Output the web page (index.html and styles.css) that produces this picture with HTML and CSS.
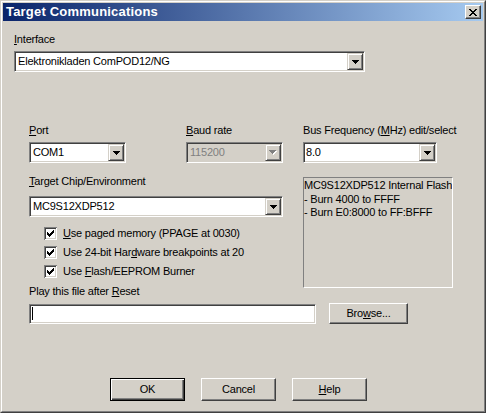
FILE: index.html
```html
<!DOCTYPE html>
<html>
<head>
<meta charset="utf-8">
<link rel="stylesheet" href="styles.css">
</head>
<body>
<div class="window">
  <div class="frame">
    <div class="titlebar">
      <span class="title">Target Communications</span>
      <div class="close">
        <svg width="8" height="7" viewBox="0 0 8 7" shape-rendering="crispEdges"><path d="M0 0h2v1h-2z M6 0h2v1h-2z M1 1h2v1h-2z M5 1h2v1h-2z M2 2h4v1h-4z M3 3h2v1h-2z M2 4h4v1h-4z M1 5h2v1h-2z M5 5h2v1h-2z M0 6h2v1h-2z M6 6h2v1h-2z" fill="#000"/></svg>
      </div>
    </div>
    <div class="content">
      <div class="label lbl-interface"><u>I</u>nterface</div>
      <div class="combo w-interface">
        <span class="combo-text">Elektronikladen ComPOD12/NG</span>
        <span class="drop"><svg width="7" height="4" viewBox="0 0 7 4" shape-rendering="crispEdges"><path d="M0 0h7v1h-1v1h-1v1h-1v1h-1v-1h-1v-1h-1v-1h-1z" fill="#000"/></svg></span>
      </div>

      <div class="row-top">
        <div class="field f-port">
          <div class="label"><u>P</u>ort</div>
          <div class="combo">
            <span class="combo-text">COM1</span>
            <span class="drop"><svg width="7" height="4" viewBox="0 0 7 4" shape-rendering="crispEdges"><path d="M0 0h7v1h-1v1h-1v1h-1v1h-1v-1h-1v-1h-1v-1h-1z" fill="#000"/></svg></span>
          </div>
        </div>
        <div class="field f-baud">
          <div class="label"><u>B</u>aud rate</div>
          <div class="combo disabled">
            <span class="combo-text">115200</span>
            <span class="drop"><svg width="8" height="5" viewBox="0 0 8 5" shape-rendering="crispEdges"><path d="M1 1h7v1h-1v1h-1v1h-1v1h-1v-1h-1v-1h-1v-1h-1z" fill="#fff"/><path d="M0 0h7v1h-1v1h-1v1h-1v1h-1v-1h-1v-1h-1v-1h-1z" fill="#808080"/></svg></span>
          </div>
        </div>
        <div class="field f-bus">
          <div class="label">Bus Frequency (<u>M</u>Hz) edit/select</div>
          <div class="combo editable">
            <span class="combo-text">8.0</span>
            <span class="drop"><svg width="7" height="4" viewBox="0 0 7 4" shape-rendering="crispEdges"><path d="M0 0h7v1h-1v1h-1v1h-1v1h-1v-1h-1v-1h-1v-1h-1z" fill="#000"/></svg></span>
          </div>
        </div>
      </div>

      <div class="lower">
        <div class="left">
          <div class="label lbl-target"><u>T</u>arget Chip/Environment</div>
          <div class="combo">
            <span class="combo-text">MC9S12XDP512</span>
            <span class="drop"><svg width="7" height="4" viewBox="0 0 7 4" shape-rendering="crispEdges"><path d="M0 0h7v1h-1v1h-1v1h-1v1h-1v-1h-1v-1h-1v-1h-1z" fill="#000"/></svg></span>
          </div>
          <div class="checks">
            <div class="check">
              <span class="box"><svg width="13" height="13" viewBox="0 0 13 13" shape-rendering="crispEdges"><path d="M3 5h1v3h-1z M4 6h1v3h-1z M5 7h1v3h-1z M6 6h1v3h-1z M7 5h1v3h-1z M8 4h1v3h-1z M9 3h1v3h-1z" fill="#000"/></svg></span>
              <span class="check-label"><u>U</u>se paged memory (PPAGE at 0030)</span>
            </div>
            <div class="check">
              <span class="box"><svg width="13" height="13" viewBox="0 0 13 13" shape-rendering="crispEdges"><path d="M3 5h1v3h-1z M4 6h1v3h-1z M5 7h1v3h-1z M6 6h1v3h-1z M7 5h1v3h-1z M8 4h1v3h-1z M9 3h1v3h-1z" fill="#000"/></svg></span>
              <span class="check-label">Use 24-bit Har<u>d</u>ware breakpoints at 20</span>
            </div>
            <div class="check">
              <span class="box"><svg width="13" height="13" viewBox="0 0 13 13" shape-rendering="crispEdges"><path d="M3 5h1v3h-1z M4 6h1v3h-1z M5 7h1v3h-1z M6 6h1v3h-1z M7 5h1v3h-1z M8 4h1v3h-1z M9 3h1v3h-1z" fill="#000"/></svg></span>
              <span class="check-label">Use <u>F</u>lash/EEPROM Burner</span>
            </div>
          </div>
          <div class="label lbl-play">Play this file after <u>R</u>eset</div>
        </div>
        <div class="info">
          <div>MC9S12XDP512 Internal Flash</div>
          <div>- Burn 4000 to FFFF</div>
          <div>- Burn E0:8000 to FF:BFFF</div>
        </div>
      </div>

      <div class="file-row">
        <div class="edit"><span class="caret"></span></div>
        <div class="btn browse">Bro<u>w</u>se...</div>
      </div>

      <div class="buttons">
        <div class="btn default">OK</div>
        <div class="btn">Cancel</div>
        <div class="btn"><span><u>H</u>elp</span></div>
      </div>
    </div>
  </div>
</div>
</body>
</html>
```
FILE: styles.css
```css
* { box-sizing: border-box; }
html, body { margin: 0; padding: 0; }
body {
  width: 486px;
  height: 413px;
  overflow: hidden;
  background: #d4d0c8;
  font-family: "Liberation Sans", Arial, sans-serif;
  font-size: 11px;
  letter-spacing: -0.2px;
  color: #000;
}
u { text-decoration: underline; }

.window {
  width: 486px;
  height: 413px;
  border: 1px solid;
  border-color: #d4d0c8 #404040 #404040 #d4d0c8;
  background: #d4d0c8;
}
.frame {
  height: 100%;
  border: 1px solid;
  border-color: #fff #808080 #808080 #fff;
  padding: 1px;
  display: flex;
  flex-direction: column;
}
.titlebar {
  height: 18px;
  flex-shrink: 0;
  display: flex;
  align-items: center;
  background: linear-gradient(to right, #0a246a, #a6caf0);
}
.title {
  flex: 1;
  padding-left: 3px;
  color: #fff;
  font-weight: bold;
  font-size: 13px;
  letter-spacing: 0.2px;
  line-height: 18px;
  white-space: nowrap;
}
.close {
  width: 16px;
  height: 14px;
  margin-right: 2px;
  background: #d4d0c8;
  border: 1px solid;
  border-color: #fff #404040 #404040 #fff;
  box-shadow: inset -1px -1px #808080;
  display: flex;
  align-items: center;
  justify-content: center;
}
.close svg { display: block; margin-left: -1px; }

.content { padding: 12px 0 0 11px; }

.label {
  height: 13px;
  line-height: 13px;
  white-space: nowrap;
}
.lbl-interface { margin-bottom: 5px; }

.combo {
  height: 21px;
  background: #fff;
  border: 1px solid;
  border-color: #808080 #fff #fff #808080;
  box-shadow: inset 1px 1px #404040, inset -1px -1px #d4d0c8;
  padding: 1px;
  display: flex;
}
.combo-text {
  flex: 1;
  line-height: 17px;
  padding-left: 2px;
  white-space: nowrap;
  overflow: hidden;
}
.combo.editable .combo-text { padding-left: 1px; }
.combo.disabled { background: #d4d0c8; }
.combo.disabled .combo-text { color: #808080; }
.drop {
  width: 16px;
  height: 17px;
  background: #d4d0c8;
  border: 1px solid;
  border-color: #d4d0c8 #404040 #404040 #d4d0c8;
  box-shadow: inset 1px 1px #fff, inset -1px -1px #808080;
  display: flex;
  align-items: center;
  justify-content: center;
}
.drop svg { display: block; }
.w-interface { width: 351px; }

.row-top {
  display: flex;
  margin: 52px 0 0 15px;
}
.field .label { margin-bottom: 5px; }
.f-port { width: 97px; }
.f-baud { width: 97px; margin-left: 60px; }
.f-bus { width: 134px; margin-left: 20px; }

.lower {
  display: flex;
  align-items: flex-start;
  margin: 12px 0 0 15px;
}
.left { width: 254px; }
.lbl-target { margin-bottom: 8px; }
.checks {
  margin: 10px 0 0 15px;
  display: flex;
  flex-direction: column;
  gap: 6px;
}
.check {
  display: flex;
  align-items: center;
  height: 13px;
}
.box {
  width: 13px;
  height: 13px;
  margin-right: 6px;
  flex-shrink: 0;
  position: relative;
  background: #fff;
  box-shadow: inset 1px 1px #808080, inset -1px -1px #fff, inset 2px 2px #404040, inset -2px -2px #d4d0c8;
}
.box svg { display: block; }
.check-label { line-height: 13px; white-space: nowrap; }
.lbl-play { margin-top: 7px; }

.info {
  width: 150px;
  height: 111px;
  margin: 2px 0 0 20px;
  border: 1px solid;
  border-color: #808080 #fff #fff #808080;
  padding: 1px 0 0 0;
  line-height: 13.5px;
  white-space: nowrap;
  overflow: hidden;
}

.file-row {
  display: flex;
  align-items: flex-start;
  margin: 5px 0 0 15px;
}
.edit {
  width: 287px;
  height: 20px;
  margin-top: 1px;
  background: #fff;
  border: 1px solid;
  border-color: #808080 #fff #fff #808080;
  box-shadow: inset 1px 1px #404040, inset -1px -1px #d4d0c8;
  padding: 1px;
  display: flex;
  align-items: flex-start;
}
.caret {
  display: block;
  width: 1px;
  height: 13px;
  margin: 1px 0 0 1px;
  background: #000;
}

.btn {
  background: #d4d0c8;
  border: 1px solid;
  border-color: #fff #404040 #404040 #fff;
  box-shadow: inset -1px -1px #808080;
  display: flex;
  align-items: center;
  justify-content: center;
  white-space: nowrap;
  line-height: 13px;
}
.btn.default {
  border-color: #000;
  box-shadow: inset 1px 1px #fff, inset -1px -1px #404040, inset -2px -2px #808080;
}
.browse {
  width: 79px;
  height: 21px;
  margin-left: 13px;
}
.buttons {
  display: flex;
  gap: 16px;
  margin: 54px 0 0 96px;
}
.buttons .btn {
  width: 75px;
  height: 23px;
}
```
